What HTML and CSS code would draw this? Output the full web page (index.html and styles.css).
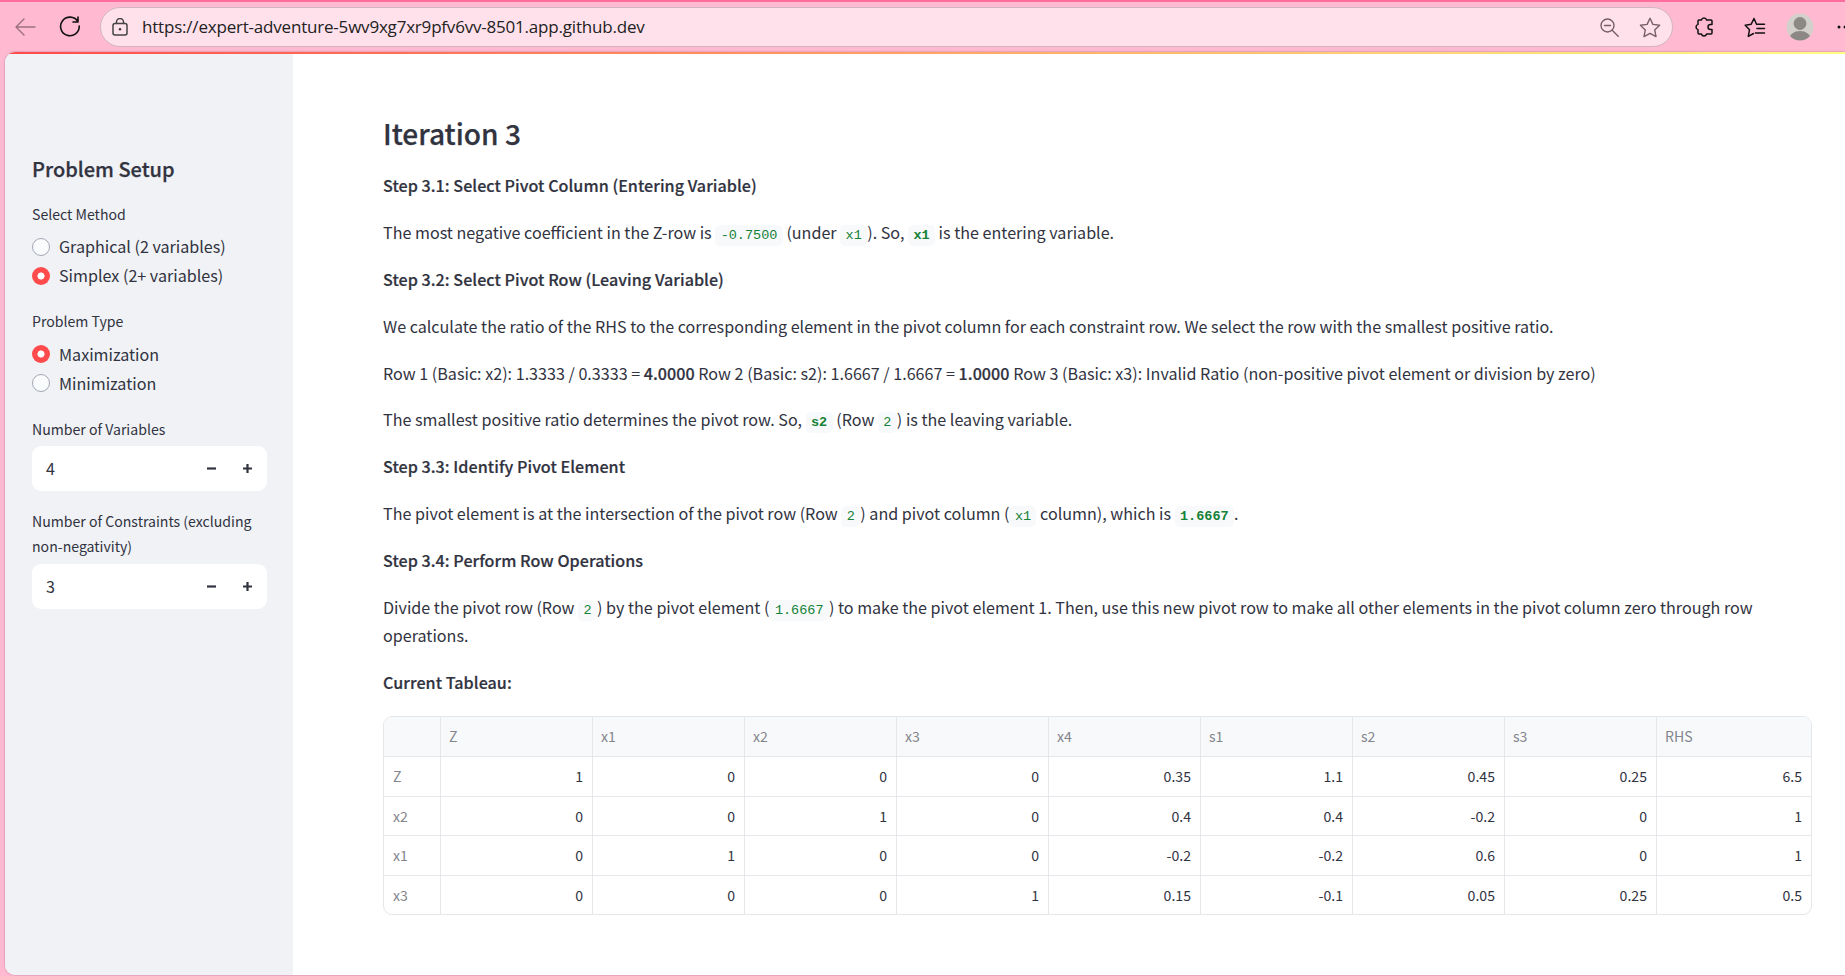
FILE: index.html
```html
<!DOCTYPE html>
<html lang="en">
<head>
<meta charset="utf-8">
<title>Simplex Solver</title>
<link rel="stylesheet" href="styles.css">
</head>
<body>
<div class="browser">
  <header class="toolbar">
    <svg class="icon back" width="22" height="20" viewBox="0 0 22 20"><path d="M20 10H1M9 2L1 10l8 8"/></svg>
    <svg class="icon reload" width="22" height="22" viewBox="0 0 22 22"><path d="M18.800 5.500A9.300 9.300 0 1 0 20.200 10M19 1v5h-5"/></svg>
    <div class="address">
      <svg class="icon lock" width="16" height="18" viewBox="0 0 16 18"><rect x="1" y="5.500" width="14" height="11.500" rx="2"/><path d="M4.500 5.500V4a3.500 3.500 0 0 1 7 0v1.500"/><circle class="solid" cx="8" cy="11.300" r="1.200"/></svg>
      <span class="url">https://expert-adventure-5wv9xg7xr9pfv6vv-8501.app.github.dev</span>
      <svg class="icon magnify" width="19" height="19" viewBox="0 0 19 19"><circle cx="7.500" cy="7.500" r="6.500"/><path d="M4.500 7.500h6M12.200 12.200l6 6"/></svg>
      <svg class="icon star" width="22" height="21" viewBox="0 0 22 21"><path d="M11 1.300l2.900 6.100 6.700.9-4.900 4.600 1.300 6.700-6-3.300-6 3.300 1.300-6.700L1.400 8.300l6.700-.9z"/></svg>
    </div>
    <svg class="icon puzzle" width="20" height="22" viewBox="0 0 20 22"><path d="M5 4h2.400a2.700 2.700 0 0 1 5.200 0H17a1 1 0 0 1 1 1v3.500h-1.500a2.500 2.500 0 0 0 0 5H18V17a1 1 0 0 1-1 1h-4.400a2.700 2.700 0 0 1-5.200 0H5a1 1 0 0 1-1-1v-3.400a2.700 2.700 0 0 1 0-5.200V5a1 1 0 0 1 1-1z"/></svg>
    <span class="divider"></span>
    <svg class="icon favorites" width="22" height="21" viewBox="0 0 22 21"><path d="M12.500 7.200L10 1.500 7.200 7.200 1.200 8.200l4.300 4.500-1.200 6.700 5.200-2.900M12.500 7.200H20.500M13 11.500h7.500M11.500 16h9"/></svg>
    <svg class="avatar" width="28" height="28" viewBox="0 0 28 28"><defs><clipPath id="disc"><circle cx="14" cy="14" r="13.500"/></clipPath></defs><circle class="disc" cx="14" cy="14" r="13.500"/><g class="person" clip-path="url(#disc)"><circle cx="14" cy="10.500" r="6.400"/><ellipse cx="14" cy="26.500" rx="11" ry="8.500"/></g></svg>
    <svg class="more" width="9" height="4" viewBox="0 0 9 4"><circle cx="2" cy="2" r="1.500"/><circle cx="8" cy="2" r="1.500"/></svg>
  </header>
  <div class="page">
    <div class="decoration"></div>
    <aside class="sidebar">
      <h2>Problem Setup</h2>
      <fieldset class="group">
        <legend>Select Method</legend>
        <label class="option"><i class="radio"></i>Graphical (2 variables)</label>
        <label class="option"><i class="radio checked"></i>Simplex (2+ variables)</label>
      </fieldset>
      <fieldset class="group">
        <legend>Problem Type</legend>
        <label class="option"><i class="radio checked"></i>Maximization</label>
        <label class="option"><i class="radio"></i>Minimization</label>
      </fieldset>
      <div class="field">
        <div class="label">Number of Variables</div>
        <div class="stepper"><span class="value">4</span><svg width="9" height="9" viewBox="0 0 9 9"><path d="M0 4.500h9"/></svg><svg width="9" height="9" viewBox="0 0 9 9"><path d="M0 4.500h9M4.500 0v9"/></svg></div>
      </div>
      <div class="field">
        <div class="label">Number of Constraints (excluding<br>non-negativity)</div>
        <div class="stepper"><span class="value">3</span><svg width="9" height="9" viewBox="0 0 9 9"><path d="M0 4.500h9"/></svg><svg width="9" height="9" viewBox="0 0 9 9"><path d="M0 4.500h9M4.500 0v9"/></svg></div>
      </div>
    </aside>
    <main class="content">
      <h3>Iteration 3</h3>
      <p><b>Step 3.1: Select Pivot Column (Entering Variable)</b></p>
      <p>The most negative coefficient in the Z-row is <code>-0.7500</code> (under <code>x1</code>). So, <b><code>x1</code></b> is the entering variable.</p>
      <p><b>Step 3.2: Select Pivot Row (Leaving Variable)</b></p>
      <p>We calculate the ratio of the RHS to the corresponding element in the pivot column for each constraint row. We select the row with the smallest positive ratio.</p>
      <p>Row 1 (Basic: x2): 1.3333 / 0.3333 = <b>4.0000</b> Row 2 (Basic: s2): 1.6667 / 1.6667 = <b>1.0000</b> Row 3 (Basic: x3): Invalid Ratio (non-positive pivot element or division by zero)</p>
      <p>The smallest positive ratio determines the pivot row. So, <b><code>s2</code></b> (Row <code>2</code>) is the leaving variable.</p>
      <p><b>Step 3.3: Identify Pivot Element</b></p>
      <p>The pivot element is at the intersection of the pivot row (Row <code>2</code>) and pivot column (<code>x1</code> column), which is <b><code>1.6667</code></b>.</p>
      <p><b>Step 3.4: Perform Row Operations</b></p>
      <p>Divide the pivot row (Row <code>2</code>) by the pivot element (<code>1.6667</code>) to make the pivot element 1. Then, use this new pivot row to make all other elements in the pivot column zero through row operations.</p>
      <p><b>Current Tableau:</b></p>
      <div class="tableau">
        <div class="row head"><span></span><span>Z</span><span>x1</span><span>x2</span><span>x3</span><span>x4</span><span>s1</span><span>s2</span><span>s3</span><span>RHS</span></div>
        <div class="row"><span>Z</span><span>1</span><span>0</span><span>0</span><span>0</span><span>0.35</span><span>1.1</span><span>0.45</span><span>0.25</span><span>6.5</span></div>
        <div class="row"><span>x2</span><span>0</span><span>0</span><span>1</span><span>0</span><span>0.4</span><span>0.4</span><span>-0.2</span><span>0</span><span>1</span></div>
        <div class="row"><span>x1</span><span>0</span><span>1</span><span>0</span><span>0</span><span>-0.2</span><span>-0.2</span><span>0.6</span><span>0</span><span>1</span></div>
        <div class="row"><span>x3</span><span>0</span><span>0</span><span>0</span><span>1</span><span>0.15</span><span>-0.1</span><span>0.05</span><span>0.25</span><span>0.5</span></div>
      </div>
    </main>
  </div>
</div>
</body>
</html>
```

FILE: styles.css
```css
* { box-sizing: border-box; }
body {
  margin: 0;
  overflow: hidden;
  color: #31333f;
  font: 16.125px/28.8px "Noto Sans CJK SC", "Noto Sans", sans-serif;
}
.browser {
  display: flex;
  flex-direction: column;
  height: 976px;
  background: #ffbad1;
  border-top: 2px solid #ff6d9c;
}
.toolbar { display: flex; align-items: center; flex: none; height: 50px; padding-left: 15px; }
.icon { flex: none; fill: none; stroke: #111; stroke-width: 1.5; stroke-linejoin: round; stroke-linecap: round; }
.icon .solid { fill: #333; stroke: none; }
.back { stroke: #9b7180; stroke-width: 1.4; }
.reload { margin-left: 22px; stroke-width: 1.6; }
.address {
  display: flex;
  align-items: center;
  width: 1573px;
  height: 40px;
  margin-left: 19px;
  padding: 0 11px 0 11px;
  background: #ffe1eb;
  border: 1px solid #d0b5c0;
  border-radius: 20px;
  flex: none;
}
.lock { stroke: #444; }
.url { flex: 1; margin-left: 14px; color: #222; font: 17px/24px "Open Sans", sans-serif; letter-spacing: -0.2px; white-space: nowrap; }
.magnify, .star { stroke: #765f68; stroke-width: 1.4; }
.star { margin-left: 20px; }
.puzzle { margin-left: 21px; }
.divider { width: 1px; height: 20px; margin-left: 16px; background: #c58fa2; }
.favorites { margin-left: 14px; }
.avatar { flex: none; margin-left: 20px; }
.disc { fill: #d3d0cc; }
.person { fill: #8c8885; }
.more { flex: none; margin-left: 23px; fill: #111; }

.page {
  display: grid;
  grid-template-columns: 288px 1fr;
  grid-template-rows: 2px 1fr;
  height: 923px;
  margin-left: 5px;
  overflow: hidden;
  background: #fff;
  border-radius: 10px 0 0 10px;
  box-shadow: 0 0 2px #b06a82;
}
.decoration { grid-column: 1 / 3; background: linear-gradient(90deg, #ff4b4b, #fffd80); }
.sidebar { padding: 99px 26px 0 27px; background: #f0f2f6; }
h2, h3 { margin: 0; font-weight: 500; -webkit-text-stroke: 0.25px; }
h2 { height: 32px; font-size: 20px; line-height: 32px; }
.group { display: flex; flex-direction: column; margin: 0 0 19px; padding: 0; border: 0; }
h2 + .group { margin-top: 16.500px; }
legend, .label { padding: 0; font-size: 14.1px; line-height: 25.2px; white-space: nowrap; }
legend { margin-bottom: 5.300px; }
.option { display: flex; align-items: center; gap: 9px; height: 29px; }
.radio { width: 18px; height: 18px; background: #fafbfd; border: 1px solid #a3a8b4; border-radius: 50%; }
.checked { background: radial-gradient(circle, #fff 3.200px, #ff4b4b 3.900px); border: 0; }
.field { margin-bottom: 18px; }
.label { margin-bottom: 4.500px; }
.stepper {
  display: flex;
  align-items: center;
  gap: 27px;
  height: 45px;
  padding: 0 15px 0 14px;
  background: #fff;
  border-radius: 9px;
}
.stepper svg { fill: none; stroke: #31333f; stroke-width: 2.2; }
.value { flex: 1; }

.content { padding: 54px 33px 0 90px; }
h3 { height: 50px; margin-bottom: 13.400px; font-size: 28.1px; line-height: 50px; }
p { margin: 0 0 18px; }
b { font-weight: 500; letter-spacing: 0.04px; -webkit-text-stroke: 0.2px; }
code {
  padding: 3px 5.400px;
  color: #158237;
  background: #f8f9fb;
  border-radius: 5px;
  font: 13.5px/1 "Liberation Mono", monospace;
}
b code { font-weight: 700; letter-spacing: 0; -webkit-text-stroke: 0; }
.tableau { width: 1429px; margin-top: 18.600px; overflow: hidden; border: 1px solid #e6e7ea; border-radius: 9px; font-size: 14.1px; }
.row { display: grid; grid-template-columns: 56px repeat(8, 152px) 1fr; height: 39.500px; border-top: 1px solid #e6e7ea; line-height: 38.200px; text-align: right; }
.row span { padding: 0 9px 0 8px; border-left: 1px solid #e6e7ea; }
.row span:first-child { padding-left: 9px; border-left: 0; text-align: left; color: #83858c; }
.head { height: 39.500px; border-top: 0; background: #f8f9fb; color: #83858c; text-align: left; line-height: 39px; }
```
